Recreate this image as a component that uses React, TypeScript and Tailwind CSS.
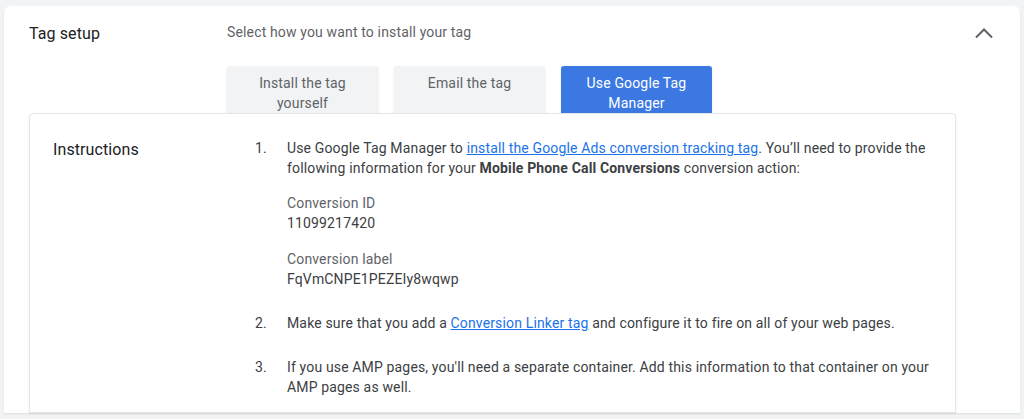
import { ReactNode } from 'react';

function Tab({ children, active }: { children: ReactNode; active?: boolean }) {
  return (
    <button
      className={`w-[151px] h-[56px] rounded-[3px] px-4 pt-[7px] text-center text-[14px] leading-[20px] tracking-[0.15px] flex items-start justify-center shadow-[0_1px_2px_rgba(60,64,67,0.18)] ${
        active ? 'bg-[#3b78e2] text-white' : 'bg-[#f1f3f4] text-[#5f6368]'
      }`}
    >
      {children}
    </button>
  );
}

export default function App() {
  return (
    <div className="min-h-screen bg-[#f1f3f4] pt-[6px] px-[4px] font-['Roboto','Liberation_Sans',sans-serif]">
      <div className="w-[1016px] bg-white rounded-t-[6px] shadow-[0_1px_2px_rgba(60,64,67,0.12)] pt-[16px] pl-[25px]">
        {/* Header */}
        <div className="flex items-start">
          <div className="w-[198px] text-[16px] leading-[24px] tracking-[0.1px] text-[#202124]">Tag setup</div>
          <div className="flex-1">
            <div className="text-[14px] leading-[20px] tracking-[0.15px] text-[#5f6368]">Select how you want to install your tag</div>
            <div className="flex gap-[16px] mt-[24px]">
              <Tab>Install the tag yourself</Tab>
              <Tab>Email the tag</Tab>
              <Tab active>Use Google Tag Manager</Tab>
            </div>
          </div>
          <div className="w-[72px] flex justify-center pt-[6px]">
            <svg width="18" height="11" viewBox="0 0 18 11" fill="none">
              <polyline points="1,9.5 9,1.5 17,9.5" stroke="#5f6368" strokeWidth="2" />
            </svg>
          </div>
        </div>

        {/* Instructions */}
        <div className="relative z-10 -mt-[9px] w-[927px] bg-white border border-[#e3e5e8] rounded-t-[4px] shadow-[0_1px_2px_rgba(60,64,67,0.08)] flex pt-[24px] pb-[15px] pl-[23px] pr-[24px]">
          <div className="w-[202px] text-[16px] leading-[24px] tracking-[0.1px] text-[#202124]">Instructions</div>
          <ol className="flex-1 text-[14px] leading-[20px] tracking-[0.15px] text-[#3c4043]">
            <li className="flex">
              <span className="w-[32px] shrink-0">1.</span>
              <div>
                <p>
                  Use Google Tag Manager to{' '}
                  <a href="#" className="text-[#1a73e8] underline">install the Google Ads conversion tracking tag</a>. You’ll need to provide the
                  following information for your <b className="font-bold">Mobile Phone Call Conversions</b> conversion action:
                </p>
                <div className="mt-[15px]">
                  <div className="text-[#5f6368]">Conversion ID</div>
                  <div className="text-[#3c4043]">11099217420</div>
                </div>
                <div className="mt-[16px]">
                  <div className="text-[#5f6368]">Conversion label</div>
                  <div className="text-[#3c4043]">FqVmCNPE1PEZEIy8wqwp</div>
                </div>
              </div>
            </li>
            <li className="flex mt-[24px]">
              <span className="w-[32px] shrink-0">2.</span>
              <p>
                Make sure that you add a{' '}
                <a href="#" className="text-[#1a73e8] underline">Conversion Linker tag</a> and configure it to fire on all of your web pages.
              </p>
            </li>
            <li className="flex mt-[24px]">
              <span className="w-[32px] shrink-0">3.</span>
              <p>
                If you use AMP pages, you'll need a separate container. Add this information to that container on your AMP pages as well.
              </p>
            </li>
          </ol>
        </div>
      </div>
    </div>
  );
}
